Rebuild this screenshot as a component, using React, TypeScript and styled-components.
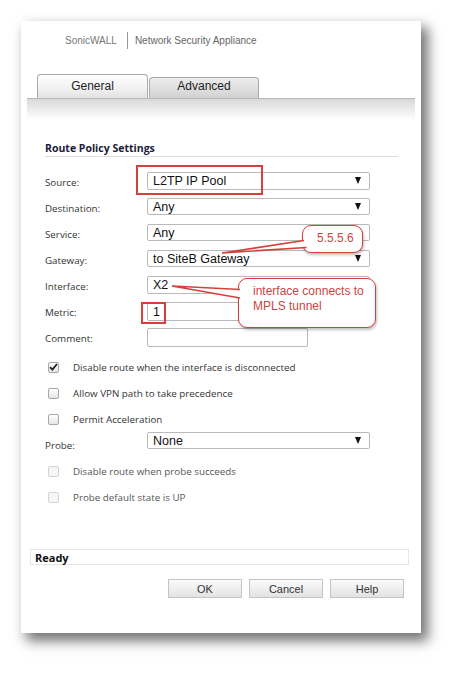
import styled, { createGlobalStyle } from 'styled-components';

const GlobalStyle = createGlobalStyle`
  html, body {
    margin: 0;
    padding: 0;
    background: #ffffff;
  }
  * {
    box-sizing: border-box;
  }
`;

const RED = '#d6403b';

const Page = styled.div`
  width: 463px;
  height: 676px;
  padding: 21px 0 0 21px;
  background: #fff;
`;

const Panel = styled.div`
  position: relative;
  width: 400px;
  height: 612px;
  background: #fff;
  box-shadow: 6px 7px 12px 1px rgba(0, 0, 0, 0.55);
  display: flex;
  flex-direction: column;
`;

const Header = styled.div`
  height: 38px;
  display: flex;
  align-items: center;
  padding-left: 44px;
  font-family: 'Liberation Sans', Arial, sans-serif;
  font-size: 10px;
  color: #666;
`;

const Brand = styled.span`
  color: #777;
`;

const Divider = styled.span`
  width: 1px;
  height: 17px;
  background: #9a9a9a;
  margin: 0 7px 0 10px;
`;

const TabBar = styled.div`
  margin: 15px 6px 0 6px;
  display: flex;
  align-items: flex-end;
  padding-left: 10px;
  height: 24px;
`;

interface ITabProps {
  active?: boolean;
}
const Tab = styled.div<ITabProps>`
  width: ${(p) => (p.active ? '111px' : '110px')};
  height: ${(p) => (p.active ? '24px' : '21px')};
  margin-right: 1px;
  border: 1px solid #a9a9a9;
  border-bottom: none;
  border-radius: 4px 4px 0 0;
  background: ${(p) =>
    p.active
      ? 'linear-gradient(#ffffff, #f1f1f1 60%, #e2e2e2)'
      : 'linear-gradient(#ececec, #d2d2d2)'};
  display: flex;
  align-items: center;
  justify-content: center;
  padding-bottom: ${(p) => (p.active ? '2px' : '4px')};
  font-family: 'Liberation Sans', Arial, sans-serif;
  font-size: 12px;
  color: #222;
`;

const Band = styled.div`
  margin: 0 6px;
  height: 22px;
  border-top: 1px solid #b8b8b8;
  background: linear-gradient(#d9d9d9, #ffffff);
`;

const Form = styled.div`
  padding: 21px 23px 0 24px;
  font-family: 'Open Sans', 'DejaVu Sans', sans-serif;
  font-size: 9.8px;
  color: #333;
`;

const Title = styled.div`
  font-size: 10.5px;
  font-weight: 700;
  color: #1c1c3a;
  padding-bottom: 1px;
  border-bottom: 1px solid #dcdcdc;
  margin-bottom: 15px;
`;

const Row = styled.div`
  height: 26px;
  display: flex;
  align-items: flex-start;
`;

const Label = styled.div`
  width: 102px;
  margin-top: 4px;
  line-height: 14px;
`;

interface IBoxProps {
  width: number;
  height?: number;
}
const Box = styled.div<IBoxProps>`
  position: relative;
  width: ${(p) => p.width}px;
  height: ${(p) => p.height ?? 17}px;
  border: 1px solid #b9b9b9;
  border-radius: 2px;
  background: #fff;
  display: flex;
  align-items: center;
  padding-left: 5px;
  font-family: 'Liberation Sans', Arial, sans-serif;
  font-size: 12.5px;
  color: #111;
`;

const Arrow = styled.span`
  position: absolute;
  right: 8px;
  top: 4px;
  width: 0;
  height: 0;
  border-left: 3.5px solid transparent;
  border-right: 3.5px solid transparent;
  border-top: 7px solid #111;
`;

const CheckRow = styled.div`
  height: 26px;
  display: flex;
  align-items: center;
  padding-left: 3px;
`;

interface ICheckProps {
  disabled?: boolean;
}
const Check = styled.span<ICheckProps>`
  position: relative;
  width: 11px;
  height: 11px;
  border: 1px solid ${(p) => (p.disabled ? '#d4d4d4' : '#a8a8a8')};
  border-radius: 2px;
  background: ${(p) =>
    p.disabled ? '#f6f6f6' : 'linear-gradient(#ffffff, #e4e4e4)'};
  margin-right: 14px;
  display: flex;
  align-items: center;
  justify-content: center;
`;

const CheckText = styled.span<ICheckProps>`
  color: ${(p) => (p.disabled ? '#555' : '#333')};
`;

const ProbeRow = styled(Row)`
  align-items: flex-start;
`;

const ProbeLabel = styled(Label)`
  margin-top: 7px;
`;

const Status = styled.div`
  margin: 39px 12px 0 9px;
  height: 16px;
  border: 1px solid #e6e6e6;
  display: flex;
  align-items: center;
  padding-left: 4px;
  font-family: 'Open Sans', 'DejaVu Sans', sans-serif;
  font-weight: 700;
  font-size: 11px;
  color: #111;
`;

const Buttons = styled.div`
  margin: 14px 17px 0 0;
  display: flex;
  justify-content: flex-end;
  gap: 7px;
`;

const Button = styled.div`
  width: 74px;
  height: 19px;
  border: 1px solid #c4c4c4;
  background: linear-gradient(#fbfbfb, #e3e3e3);
  display: flex;
  align-items: center;
  justify-content: center;
  font-family: 'Liberation Sans', Arial, sans-serif;
  font-size: 11px;
  color: #333;
`;

interface IMarkProps {
  left: number;
  top: number;
  width: number;
  height: number;
}
const RedMark = styled.div<IMarkProps>`
  position: absolute;
  left: ${(p) => p.left}px;
  top: ${(p) => p.top}px;
  width: ${(p) => p.width}px;
  height: ${(p) => p.height}px;
  border: 2px solid ${RED};
`;

const Callout = styled.div<IMarkProps>`
  position: absolute;
  left: ${(p) => p.left}px;
  top: ${(p) => p.top}px;
  width: ${(p) => p.width}px;
  height: ${(p) => p.height}px;
  border: 1.5px solid ${RED};
  border-radius: 9px;
  background: #fff;
  box-shadow: 1px 2px 3px rgba(0, 0, 0, 0.25);
  font-family: 'Liberation Sans', Arial, sans-serif;
  font-size: 12px;
  line-height: 15px;
  color: #c9463f;
  padding: 5px 0 0 14px;
`;

const TailLayer = styled.svg`
  position: absolute;
  left: 0;
  top: 0;
  width: 400px;
  height: 612px;
  pointer-events: none;
`;

function Tick() {
  return (
    <svg width="9" height="8" viewBox="0 0 9 8">
      <path d="M1 4.2 L3.4 6.6 L8 1" fill="none" stroke="#222" strokeWidth="1.8" />
    </svg>
  );
}

function App() {
  return (
    <Page>
      <GlobalStyle />
      <Panel>
        <Header>
          <Brand>SonicWALL</Brand>
          <Divider />
          <span>Network Security Appliance</span>
        </Header>
        <TabBar>
          <Tab active>General</Tab>
          <Tab>Advanced</Tab>
        </TabBar>
        <Band />
        <Form>
          <Title>Route Policy Settings</Title>
          <Row>
            <Label>Source:</Label>
            <Box width={223} height={18}>
              L2TP IP Pool
              <Arrow />
            </Box>
          </Row>
          <Row>
            <Label>Destination:</Label>
            <Box width={223}>
              Any
              <Arrow />
            </Box>
          </Row>
          <Row>
            <Label>Service:</Label>
            <Box width={223}>
              Any
              <Arrow />
            </Box>
          </Row>
          <Row>
            <Label>Gateway:</Label>
            <Box width={223}>
              to SiteB Gateway
              <Arrow />
            </Box>
          </Row>
          <Row>
            <Label>Interface:</Label>
            <Box width={223} height={18}>
              X2
            </Box>
          </Row>
          <Row>
            <Label>Metric:</Label>
            <Box width={161} height={19}>
              1
            </Box>
          </Row>
          <Row>
            <Label>Comment:</Label>
            <Box width={161} height={19} />
          </Row>
          <CheckRow>
            <Check>
              <Tick />
            </Check>
            <CheckText>Disable route when the interface is disconnected</CheckText>
          </CheckRow>
          <CheckRow>
            <Check />
            <CheckText>Allow VPN path to take precedence</CheckText>
          </CheckRow>
          <CheckRow>
            <Check />
            <CheckText>Permit Acceleration</CheckText>
          </CheckRow>
          <ProbeRow>
            <ProbeLabel>Probe:</ProbeLabel>
            <Box width={223}>
              None
              <Arrow />
            </Box>
          </ProbeRow>
          <CheckRow>
            <Check disabled />
            <CheckText disabled>Disable route when probe succeeds</CheckText>
          </CheckRow>
          <CheckRow>
            <Check disabled />
            <CheckText disabled>Probe default state is UP</CheckText>
          </CheckRow>
        </Form>
        <Status>Ready</Status>
        <Buttons>
          <Button>OK</Button>
          <Button>Cancel</Button>
          <Button>Help</Button>
        </Buttons>

        <RedMark left={115} top={144} width={127} height={30} />
        <RedMark left={120} top={281} width={25} height={22} />
        <Callout left={281} top={204} width={61} height={28}>
          5.5.5.6
        </Callout>
        <Callout left={217} top={257} width={138} height={50}>
          interface connects to
          <br />
          MPLS tunnel
        </Callout>
        <TailLayer viewBox="0 0 400 612">
          <polygon points="284,219 201,232 286,226" fill="#fff" />
          <polyline points="283,219.5 201,232 285.5,226.5" fill="none" stroke={RED} strokeWidth="1.6" />
          <polygon points="220,268 151,265 220,277" fill="#fff" />
          <polyline points="219,268.5 151,265 219,277" fill="none" stroke={RED} strokeWidth="1.6" />
        </TailLayer>
      </Panel>
    </Page>
  );
}

export default App;
